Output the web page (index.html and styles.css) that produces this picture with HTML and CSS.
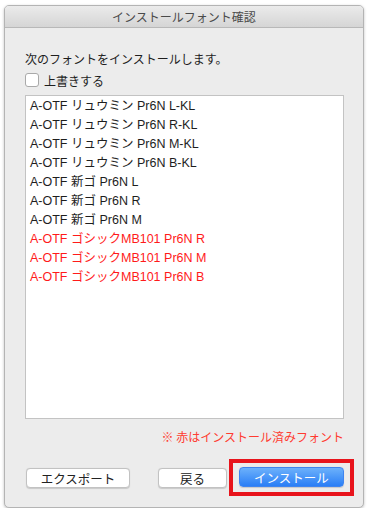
FILE: index.html
```html
<!DOCTYPE html>
<html lang="ja">
<head>
  <meta charset="UTF-8" />
  <title>インストールフォント確認</title>
  <link rel="stylesheet" href="styles.css">
</head>
<body>
  <div class="window">
    <div class="titlebar">インストールフォント確認</div>

    <div class="content">
      <p class="lead">次のフォントをインストールします。</p>
      <label class="overwrite"><span class="checkbox"></span>上書きする</label>

      <ul class="font-list">
        <li>A-OTF リュウミン Pr6N L-KL</li>
        <li>A-OTF リュウミン Pr6N R-KL</li>
        <li>A-OTF リュウミン Pr6N M-KL</li>
        <li>A-OTF リュウミン Pr6N B-KL</li>
        <li>A-OTF 新ゴ Pr6N L</li>
        <li>A-OTF 新ゴ Pr6N R</li>
        <li>A-OTF 新ゴ Pr6N M</li>
        <li class="installed">A-OTF ゴシックMB101 Pr6N R</li>
        <li class="installed">A-OTF ゴシックMB101 Pr6N M</li>
        <li class="installed">A-OTF ゴシックMB101 Pr6N B</li>
      </ul>

      <p class="note">※ 赤はインストール済みフォント</p>

      <div class="buttons">
        <button class="btn export">エクスポート</button>
        <button class="btn back">戻る</button>
        <div class="highlight">
          <button class="btn primary">インストール</button>
        </div>
      </div>
    </div>
  </div>
</body>
</html>
```

FILE: styles.css
```css
* { box-sizing: border-box; }

body {
  margin: 0;
  padding: 5px 0 0 4px;
  background-color: #fff;
  font-family: "Noto Sans CJK JP", sans-serif;
  font-size: 12px;
  color: #1e1e1e;
}

.window {
  width: 360px;
  height: 503px;
  background-color: #ececec;
  border: 1px solid #b4b4b4;
  border-radius: 5px;
  box-shadow: 0 1px 3px rgba(0, 0, 0, 0.25);
  overflow: hidden;
  display: flex;
  flex-direction: column;
}

.titlebar {
  height: 22px;
  line-height: 21px;
  text-align: center;
  font-size: 12px;
  color: #4a4a4a;
  background: linear-gradient(#ebebeb, #d5d5d5);
  border-bottom: 1px solid #b8b8b8;
}

.content {
  flex: 1;
  padding: 0 19px 0 20px;
  display: flex;
  flex-direction: column;
}

.lead {
  margin: 22px 0 0 0;
  line-height: 18px;
}

.overwrite {
  display: flex;
  align-items: center;
  margin-top: 3px;
  height: 18px;
}

.checkbox {
  width: 14px;
  height: 14px;
  margin-right: 5px;
  background-color: #fff;
  border: 1px solid #a9a9a9;
  border-radius: 3px;
}

.font-list {
  list-style: none;
  margin: 6px 0 0 0;
  padding: 1px 0 0 4px;
  height: 324px;
  background-color: #fff;
  border: 1px solid #c3c3c3;
  font-family: "Liberation Sans", "Noto Sans CJK JP", sans-serif;
  font-size: 12.5px;
}

.font-list li {
  height: 19px;
  line-height: 19px;
  white-space: nowrap;
}

.font-list li.installed { color: #ff1a1a; }

.note {
  margin: 10px 0 0 0;
  text-align: right;
  font-size: 12px;
  line-height: 16px;
  color: #ff3b30;
}

.buttons {
  display: flex;
  align-items: center;
  margin-top: 14px;
}

.btn {
  height: 20px;
  padding: 0;
  font-family: "Noto Sans CJK JP", sans-serif;
  font-size: 12.5px;
  color: #222;
  background-color: #fff;
  border: 1px solid #c2c2c2;
  border-radius: 4px;
  box-shadow: 0 0.5px 1px rgba(0, 0, 0, 0.15);
}

.export { width: 104px; margin-left: 1px; }
.back { width: 69px; margin-left: 28px; }

.highlight {
  margin: 0 -10px 0 2px;
  padding: 4px 6px 5px 6px;
  border: 4px solid #e8141c;
  display: flex;
}

.primary {
  width: 105px;
  color: #fff;
  border-color: #3f84ef;
  background: linear-gradient(#6cb1fb, #2a7ef6);
}
```
